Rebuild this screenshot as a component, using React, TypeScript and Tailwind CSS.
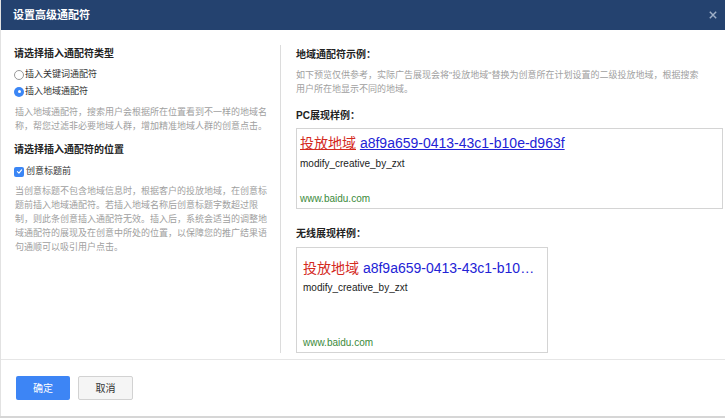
import React from 'react';

const FONT = "font-['Liberation_Sans','Noto_Sans_CJK_SC',sans-serif]";

const TYPE_DESC = [
  '插入地域通配符，搜索用户会根据所在位置看到不一样的地域名',
  '称，帮您过滤非必要地域人群，增加精准地域人群的创意点击。',
];

const POS_DESC = [
  '当创意标题不包含地域信息时，根据客户的投放地域，在创意标',
  '题前插入地域通配符。若插入地域名称后创意标题字数超过限',
  '制，则此条创意插入通配符无效。插入后，系统会适当的调整地',
  '域通配符的展现及在创意中所处的位置，以保障您的推广结果语',
  '句通顺可以吸引用户点击。',
];

function Radio({ checked, label }: { checked?: boolean; label: string }) {
  return (
    <label className="flex items-center h-[17px] text-[9px] text-[#333]">
      {checked ? (
        <span className="w-[10px] h-[10px] rounded-full bg-[#3b86f5] flex items-center justify-center">
          <span className="w-[3px] h-[3px] rounded-full bg-white" />
        </span>
      ) : (
        <span className="w-[10px] h-[10px] rounded-full border border-[#999] bg-white" />
      )}
      <span className="ml-[1px]">{label}</span>
    </label>
  );
}

function Checkbox({ label }: { label: string }) {
  return (
    <label className="flex items-center h-[17px] text-[9px] text-[#333]">
      <span className="w-[10px] h-[10px] rounded-[2px] bg-[#3b86f5] flex items-center justify-center">
        <svg viewBox="0 0 10 10" className="w-[7px] h-[7px]">
          <path d="M2 5.3 L4.2 7.4 L8 2.6" stroke="white" strokeWidth="1.6" fill="none" strokeLinecap="round" strokeLinejoin="round" />
        </svg>
      </span>
      <span className="ml-[2px]">{label}</span>
    </label>
  );
}

function Lines({ lines, className }: { lines: string[]; className: string }) {
  return (
    <p className={className}>
      {lines.map((l) => (
        <span key={l} className="block whitespace-nowrap">{l}</span>
      ))}
    </p>
  );
}

export default function App() {
  return (
    <div className={`w-[725px] h-[418px] bg-[#d6d6d6] ${FONT}`}>
      <div className="h-[416px] bg-white flex flex-col border-l border-[#e2e2e2]">
        {/* header */}
        <div className="h-[30px] bg-[#24426f] flex items-center justify-between pl-[12px] pr-[8px] shrink-0">
          <span className="text-white font-bold text-[11px]">设置高级通配符</span>
          <svg viewBox="0 0 10 10" className="w-[8px] h-[8px]">
            <path d="M1 1 L9 9 M9 1 L1 9" stroke="#9fb0c8" strokeWidth="1.8" />
          </svg>
        </div>

        {/* body */}
        <div className="flex-1 flex pt-[15px] pb-[6px]">
          <div className="w-[280px] border-r border-[#dcdcdc] pl-[13px] pr-[12px] shrink-0">
            <div className="text-[10px] font-bold text-[#222] leading-[14px] mt-[2px]">请选择插入通配符类型</div>
            <div className="mt-[5px]">
              <Radio label="插入关键词通配符" />
              <Radio checked label="插入地域通配符" />
            </div>
            <Lines lines={TYPE_DESC} className="text-[9px] leading-[14px] text-[#a0a0a0] mt-[5px] pl-[1px]" />
            <div className="text-[10px] font-bold text-[#222] leading-[14px] mt-[10px]">请选择插入通配符的位置</div>
            <div className="mt-[6px]">
              <Checkbox label="创意标题前" />
            </div>
            <Lines lines={POS_DESC} className="text-[9px] leading-[14px] text-[#a0a0a0] mt-[4px] pl-[1px]" />
          </div>

          <div className="flex-1 pl-[15px] pr-[2px]">
            <div className="text-[10px] font-bold text-[#222] leading-[14px] mt-[3px]">地域通配符示例：</div>
            <p className="text-[9px] leading-[14px] text-[#a0a0a0] mt-[6px] w-[406px]">
              如下预览仅供参考，实际广告展现会将"投放地域"替换为创意所在计划设置的二级投放地域，根据搜索用户所在地显示不同的地域。
            </p>
            <div className="text-[10px] font-bold text-[#222] leading-[14px] mt-[13px]">PC展现样例：</div>
            <div className="mt-[5px] h-[81px] border border-[#d4d4d4] pl-[3px] pt-[5px] pb-[2px] flex flex-col">
              <div className="text-[14px] leading-[18px] whitespace-nowrap">
                <span className="text-[#d42a1e] underline">投放地域</span>{' '}
                <span className="text-[#2323d6] underline">a8f9a659-0413-43c1-b10e-d963f</span>
              </div>
              <div className="text-[10px] leading-[14px] text-[#222] mt-[5px]">modify_creative_by_zxt</div>
              <div className="text-[10px] leading-[14px] text-[#3c8a3c] mt-auto">www.baidu.com</div>
            </div>
            <div className="text-[10px] font-bold text-[#222] leading-[14px] mt-[18px]">无线展现样例：</div>
            <div className="mt-[6px] w-[252px] h-[106px] border border-[#d4d4d4] pl-[6px] pt-[11px] pb-[2px] flex flex-col">
              <div className="text-[14px] leading-[18px] whitespace-nowrap">
                <span className="text-[#d42a1e]">投放地域</span>{' '}
                <span className="text-[#2323d6]">a8f9a659-0413-43c1-b10…</span>
              </div>
              <div className="text-[10px] leading-[14px] text-[#222] mt-[4px]">modify_creative_by_zxt</div>
              <div className="text-[10px] leading-[14px] text-[#3c8a3c] mt-auto">www.baidu.com</div>
            </div>
          </div>
        </div>

        {/* footer */}
        <div className="h-[57px] border-t border-[#e6e6e6] flex items-start gap-[8px] pl-[15px] pt-[16px] shrink-0">
          <button className="w-[54px] h-[24px] rounded-[2px] bg-[#3d85f5] text-white text-[10px]">确定</button>
          <button className="w-[55px] h-[24px] rounded-[2px] bg-[#f5f5f5] border border-[#d2d2d2] text-[#333] text-[10px]">取消</button>
        </div>
      </div>
    </div>
  );
}
